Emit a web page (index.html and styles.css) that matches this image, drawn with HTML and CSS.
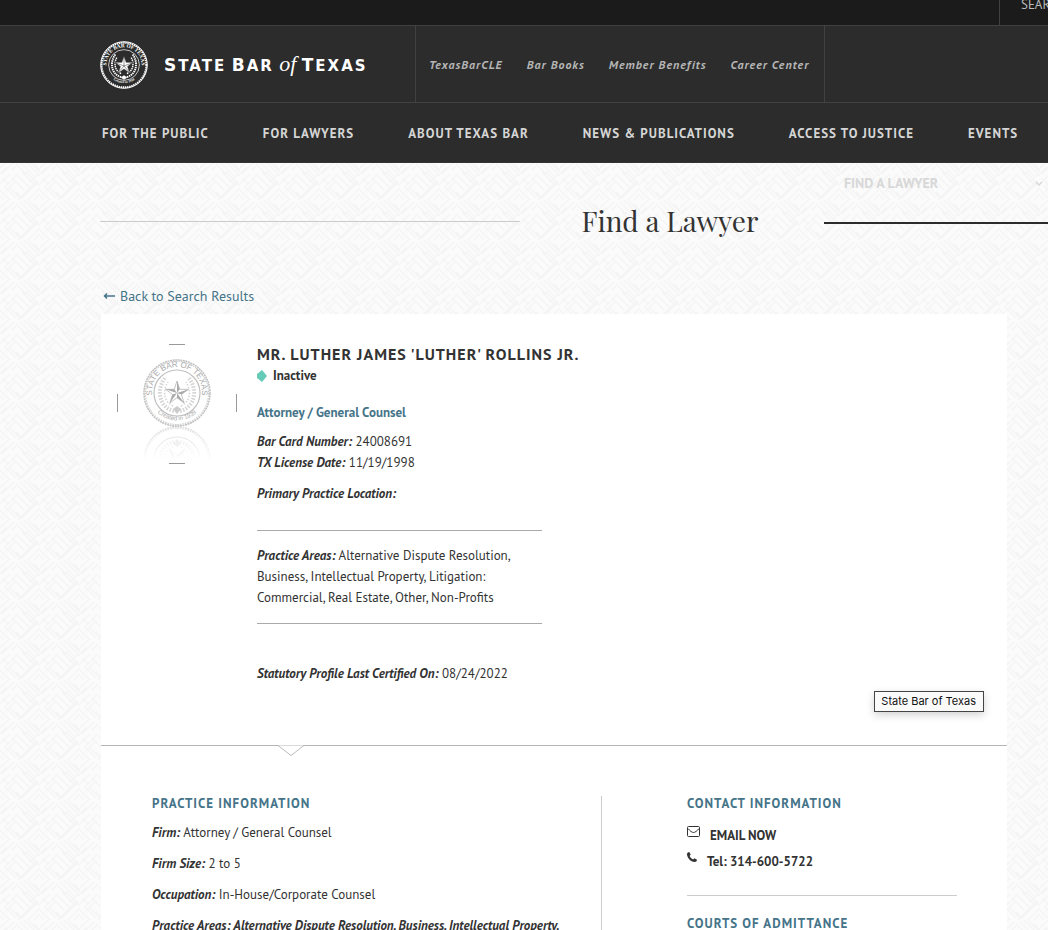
FILE: index.html
```html
<!DOCTYPE html>
<html lang="en">
<head>
<meta charset="utf-8">
<meta name="viewport" content="width=device-width, initial-scale=1">
<title>Find a Lawyer | State Bar of Texas</title>
<link rel="stylesheet" href="styles.css">
</head>
<body>
<header class="site-header">
  <div class="top-bar"><a class="search-link" href="#">SEARCH</a></div>
  <div class="brand-bar">
    <a class="brand" href="#">
      <svg class="brand-seal" viewBox="0 0 100 100" fill="none" stroke="#fff" aria-hidden="true">
        <defs>
          <path id="sealArcTop" d="M14.500 58A36.500 36.500 0 1 1 85.500 58"/>
          <path id="sealArcBottom" d="M13 62A39.500 39.500 0 0 0 87 62"/>
        </defs>
        <circle cx="50" cy="50" r="48.500" stroke-width="2"/>
        <circle cx="50" cy="50" r="46.500" stroke-width="4" stroke-dasharray="3 1.500"/>
        <circle cx="50" cy="50" r="32" stroke-width="1.500"/>
        <g stroke-width="4" stroke-dasharray="3 1.500">
          <path d="M44 75C22 69 20 42 33 27M56 75C78 69 80 42 67 27"/>
          <path d="M44 68C30 62 28 45 36 33M56 68C70 62 72 45 64 33" stroke-width="3"/>
        </g>
        <path d="M50 31 54.500 44.500 69 44.500 57.500 53 62 67 50 58.500 38 67 42.500 53 31 44.500 45.500 44.500Z" fill="#fff" stroke="#2b2c2b" stroke-width="1"/>
        <path d="M50 52V32M50 52 62 66M50 52 69 45M50 52 31 45M50 52 38 66" stroke="#2b2c2b" stroke-width="1"/>
        <path d="M44 76 50 72 56 76 50 80Z" fill="#fff"/>
        <g class="seal-text" fill="#fff" stroke="none" text-anchor="middle">
          <text><textPath href="#sealArcTop" startOffset="50%">STATE BAR OF TEXAS</textPath></text>
          <text class="seal-small"><textPath href="#sealArcBottom" startOffset="50%">Created in 1939</textPath></text>
        </g>
      </svg>
      <span class="wordmark"><b>S<small>TATE</small></b> <b>B<small>AR</small></b> <i>of</i> <b>T<small>EXAS</small></b></span>
    </a>
    <nav class="partner-nav" aria-label="Partner sites">
      <a href="#">TexasBarCLE</a><a href="#">Bar Books</a><a href="#">Member Benefits</a><a href="#">Career Center</a>
    </nav>
  </div>
  <nav class="main-nav" aria-label="Main">
    <a href="#">FOR THE PUBLIC</a><a href="#">FOR LAWYERS</a><a href="#">ABOUT TEXAS BAR</a><a href="#">NEWS &amp; PUBLICATIONS</a><a href="#">ACCESS TO JUSTICE</a><a href="#">EVENTS</a>
  </nav>
</header>

<main>
  <div class="title-row">
    <div class="title-rule"></div>
    <h1>Find a Lawyer</h1>
    <div class="section-menu">
      <button type="button">FIND A LAWYER
        <svg viewBox="0 0 8 6" fill="none" stroke="currentColor" stroke-width="1.500" aria-hidden="true"><path d="M1 1 4 4 7 1"/></svg>
      </button>
    </div>
  </div>

  <div class="content">
    <a class="back-link" href="#">
      <svg viewBox="0 0 12 8" fill="none" stroke="currentColor" stroke-width="1.500" aria-hidden="true"><path d="M12 4H2M4 1.500 1.500 4 4 6.500"/></svg>Back to Search Results</a>

    <div class="card">
      <section class="profile">
        <svg class="photo" viewBox="0 0 120 120" fill="none" role="img" aria-label="State Bar of Texas seal">
          <defs>
            <path id="photoArcTop" d="M36 55A25 25 0 1 1 84 55"/>
            <path id="photoArcBottom" d="M33 58A29 29 0 0 0 87 58"/>
            <linearGradient id="fade" x1="0" y1="82" x2="0" y2="116" gradientUnits="userSpaceOnUse">
              <stop offset="0" stop-color="#fff" stop-opacity=".45"/><stop offset="1" stop-color="#fff"/>
            </linearGradient>
            <g id="seal" stroke="#c0c0c0">
              <circle cx="60" cy="49" r="33" stroke-width="1.500" stroke-dasharray="2 .6"/>
              <circle cx="60" cy="49" r="31.500" stroke-width="1" stroke-dasharray="1.500 1"/>
              <circle cx="60" cy="49" r="23" stroke-width="1.200"/>
              <g stroke="#d4d4d4" stroke-width="4" stroke-dasharray="1.500 1.500">
                <path d="M57 67C41 63 39 44 49 33M63 67C79 63 81 44 71 33"/>
                <path d="M56 62C47 58 45 47 51 38M64 62C73 58 75 47 69 38" stroke-width="1.500"/>
              </g>
              <path d="M56 65 60 62 64 65 60 70Z" fill="#ccc" stroke="none"/>
              <path d="M60 37 62.700 45.300 71.500 45.300 64.400 50.500 67.100 59 60 53.700 52.900 59 55.600 50.500 48.500 45.300 57.300 45.300Z" fill="#fff" stroke="#aaa" stroke-width=".7"/>
              <path d="M60 49V37L62.700 45.300ZM60 49 71.500 45.300 64.400 50.500ZM60 49 67.100 59 60 53.700ZM60 49 52.900 59 55.600 50.500ZM60 49 48.500 45.300 57.300 45.300Z" fill="#aaa" stroke="none"/>
            </g>
          </defs>
          <use href="#seal" transform="matrix(1 0 0 -1 0 165)"/>
          <path d="M20 82H100V118H20Z" fill="url(#fade)"/>
          <path d="M20 116H100V120H20Z" fill="#fff"/>
          <use href="#seal"/>
          <g class="photo-text" fill="#aaa" text-anchor="middle">
            <text><textPath href="#photoArcTop" startOffset="50%">STATE BAR OF TEXAS</textPath></text>
            <text class="photo-small"><textPath href="#photoArcBottom" startOffset="50%">Created in 1939</textPath></text>
          </g>
          <path d="M52 .5H68M52 119.500H68M.5 50V68M119.500 50V68" stroke="#999"/>
        </svg>
        <div class="details">
          <h2>MR. LUTHER JAMES 'LUTHER' ROLLINS JR.</h2>
          <p class="status"><svg viewBox="0 0 10 12" fill="#68cbb8" aria-hidden="true"><path d="M5 0 10 6 5 12 0 8V4Z"/></svg>Inactive</p>
          <h3>Attorney / General Counsel</h3>
          <p><strong>Bar Card Number:</strong> 24008691<br><strong>TX License Date:</strong> 11/19/1998</p>
          <p class="location"><strong>Primary Practice Location:</strong></p>
          <p class="areas"><strong>Practice Areas:</strong> Alternative Dispute Resolution,<br>Business, Intellectual Property, Litigation:<br>Commercial, Real Estate, Other, Non-Profits</p>
          <p class="certified"><strong>Statutory Profile Last Certified On:</strong> 08/24/2022</p>
        </div>
        <div class="tooltip" role="tooltip">State Bar of Texas</div>
      </section>

      <svg class="notch" viewBox="0 0 26 12" fill="#fff" stroke="#bbb" aria-hidden="true"><path d="M0 .5 13 10.500 26 .5"/></svg>

      <div class="columns">
        <section class="practice">
          <h4>PRACTICE INFORMATION</h4>
          <p><strong>Firm:</strong> Attorney / General Counsel</p>
          <p><strong>Firm Size:</strong> 2 to 5</p>
          <p><strong>Occupation:</strong> In-House/Corporate Counsel</p>
          <p><strong>Practice Areas: Alternative Dispute Resolution, Business, Intellectual Property,</strong></p>
        </section>
        <section class="contact">
          <h4>CONTACT INFORMATION</h4>
          <a class="contact-link email" href="#"><svg viewBox="0 0 13 11" fill="none" stroke="#333" aria-hidden="true"><rect x=".5" y=".5" width="12" height="10" rx="1"/><path d="M1 2.500C3 5 5 6.500 6.500 6.500S10 5 12 2.500"/></svg>EMAIL NOW</a>
          <a class="contact-link phone" href="#"><svg viewBox="0 0 10 10" fill="#333" aria-hidden="true"><path d="M2.300 0 3.700 2.600 2.600 3.900C3.300 5.300 4.500 6.600 6.100 7.400L7.300 6.300 10 7.800C9.800 9.200 9 10 7.700 10 3.600 9.600.3 6 0 2.200 0 .9 1 .2 2.300 0Z"/></svg>Tel: 314-600-5722</a>
          <h4 class="courts">COURTS OF ADMITTANCE</h4>
        </section>
      </div>
    </div>
  </div>
</main>
</body>
</html>
```
FILE: styles.css
```css
* { box-sizing: border-box; }

html { height: 100%; overflow: hidden; }

body {
  height: 100%;
  margin: 0;
  overflow: hidden;
  font: 13px/21px "PT Sans", "Noto Sans", sans-serif;
  color: #333;
  background: #fbfbfb url("data:image/svg+xml,%3Csvg xmlns='http://www.w3.org/2000/svg' width='40' height='40' fill='none' stroke='%23f4f4f4' stroke-width='1.4'%3E%3Cpath d='M0 8 8 0M0 14 7 7M2 14 14 2M2 18 8 24M0 24 10 14M6 26 18 14M5 32 16 21M16 4 26 14M20 2 34 16M24 0 40 16M28 0 40 12M12 10 18 4M12 18 24 30M18 16 30 28M22 12 36 26M26 12 40 26M0 30 10 40M4 26 16 38M10 28 20 38M18 40 38 20M22 38 38 22M28 40 40 28M34 40 40 34M16 32 22 38M34 4 40 10M0 36 4 40M30 22 38 14'/%3E%3C/svg%3E");
}

a { color: inherit; text-decoration: none; }
h1, h2, h3, h4, p { margin: 0; }
svg { flex: none; }

/* Header */
.site-header {
  background: #2b2c2b;
  border-bottom: 1px solid #333;
  white-space: nowrap;
}

.top-bar {
  display: flex;
  justify-content: flex-end;
  height: 26px;
  overflow: hidden;
  background: #1b1b1b;
  border-bottom: 1px solid #414141;
}

.search-link {
  width: 49px;
  height: 40px;
  padding-left: 21px;
  border-left: 1px solid #414141;
  color: #bbb;
  line-height: 10px;
}

.brand-bar {
  display: flex;
  height: 77px;
  border-bottom: 1px solid #414141;
}

.brand {
  display: flex;
  flex: none;
  gap: 16px;
  align-items: center;
  width: 415px;
  padding: 2px 0 0 100px;
  color: #fff;
}

.brand-seal { width: 48px; height: 50px; }

.seal-text { font: bold 11px "Liberation Serif", serif; }
.seal-small { font-size: 7px; }

.wordmark {
  font: 17px/24px "DejaVu Sans", sans-serif;
}
.wordmark b { letter-spacing: 2px; }
.wordmark small { font-size: 15px; }
.wordmark i { font: italic 22px/24px "Liberation Serif", serif; }

.partner-nav {
  display: flex;
  gap: 24px;
  align-items: center;
  width: 410px;
  padding-left: 13px;
  border: solid #414141;
  border-width: 0 1px;
  color: #b5b5b5;
  font-size: 12px;
  font-style: italic;
  font-weight: 600;
  letter-spacing: 1px;
}

.main-nav {
  display: flex;
  gap: 54px;
  align-items: center;
  height: 60px;
  margin-bottom: -1px;
  padding-left: 102px;
  color: #d5d5d5;
  font-weight: 600;
  letter-spacing: 1px;
}

/* Page title */
.title-row {
  display: grid;
  grid-template-columns: 420px 304px 1fr;
  height: 118px;
  padding-left: 100px;
}

.title-rule { height: 59px; border-bottom: 1px solid #ccc; }

h1 {
  padding: 38px 4px 0 0;
  font: 28px/40px "Playfair Display", "Liberation Serif", serif;
  text-align: center;
}

.section-menu { height: 61px; border-bottom: 2px solid #2b2c2b; }

.section-menu button {
  display: flex;
  justify-content: space-between;
  align-items: center;
  width: 100%;
  padding: 10px 5px 10px 20px;
  border: 0;
  background: none;
  color: #d8d8d8;
  font: 600 14px/21px "PT Sans", "Noto Sans", sans-serif;
}
.section-menu svg { width: 8px; height: 6px; }

/* Content */
.content { margin: 0 41px 0 101px; }

.back-link {
  display: flex;
  gap: 5px;
  align-items: center;
  height: 33px;
  padding: 0 0 3px 2px;
  color: #457489;
  font-size: 14px;
}
.back-link svg { width: 12px; height: 8px; }

.card { background: #fff; }

.profile {
  position: relative;
  display: flex;
  gap: 20px;
  height: 432px;
  padding: 30px 16px;
  border-bottom: 1px solid #b5b5b5;
}

.photo { width: 120px; height: 120px; }
.photo-text { font: 8px "Liberation Sans", sans-serif; }
.photo-small { font-size: 6px; }

strong { font-style: italic; font-weight: 600; }

h2 {
  font-size: 16px;
  font-weight: 600;
  letter-spacing: 1px;
  line-height: 21px;
  white-space: nowrap;
}

.status { display: flex; gap: 6px; align-items: center; font-weight: 600; }
.status svg { width: 10px; height: 12px; }

h3 {
  margin: 16px 0 8px;
  color: #457489;
  font-size: 13px;
  font-weight: 600;
  line-height: 21px;
}

.location { margin-top: 10px; }

.areas {
  width: 285px;
  margin: 26px 0 39px;
  padding: 14px 0 15px;
  border: solid #aaa;
  border-width: 1px 0;
  white-space: nowrap;
}

.tooltip {
  position: absolute;
  right: 23px;
  bottom: 33px;
  padding: 0 7px 0 6px;
  border: 1px solid #444;
  background: #fafafa;
  box-shadow: 0 3px 8px rgba(0, 0, 0, .18);
  color: #111;
  font: 11px/19px Inter, sans-serif;
}

.notch {
  position: relative;
  display: block;
  width: 26px;
  height: 12px;
  margin: -1px 0 0 177px;
}

.columns {
  display: grid;
  grid-template-columns: 501px 1fr;
  padding-top: 39px;
}

.practice {
  padding-left: 51px;
  border-right: 1px solid #ccc;
  white-space: nowrap;
}

h4 {
  margin: -3px 0 8px;
  color: #457489;
  font-size: 13px;
  font-weight: 600;
  letter-spacing: 1px;
}

.practice p { margin-bottom: 10px; }

.contact { padding: 0 50px 0 85px; }

.contact-link {
  display: flex;
  gap: 10px;
  align-items: flex-start;
  margin-bottom: 5px;
  font-weight: 600;
}
.contact-link.email { padding-top: 3px; }
.email svg { width: 13px; height: 13px; }
.phone svg { width: 10px; height: 12px; }

.courts {
  margin-top: 23px;
  padding-top: 17px;
  border-top: 1px solid #ccc;
}
```
